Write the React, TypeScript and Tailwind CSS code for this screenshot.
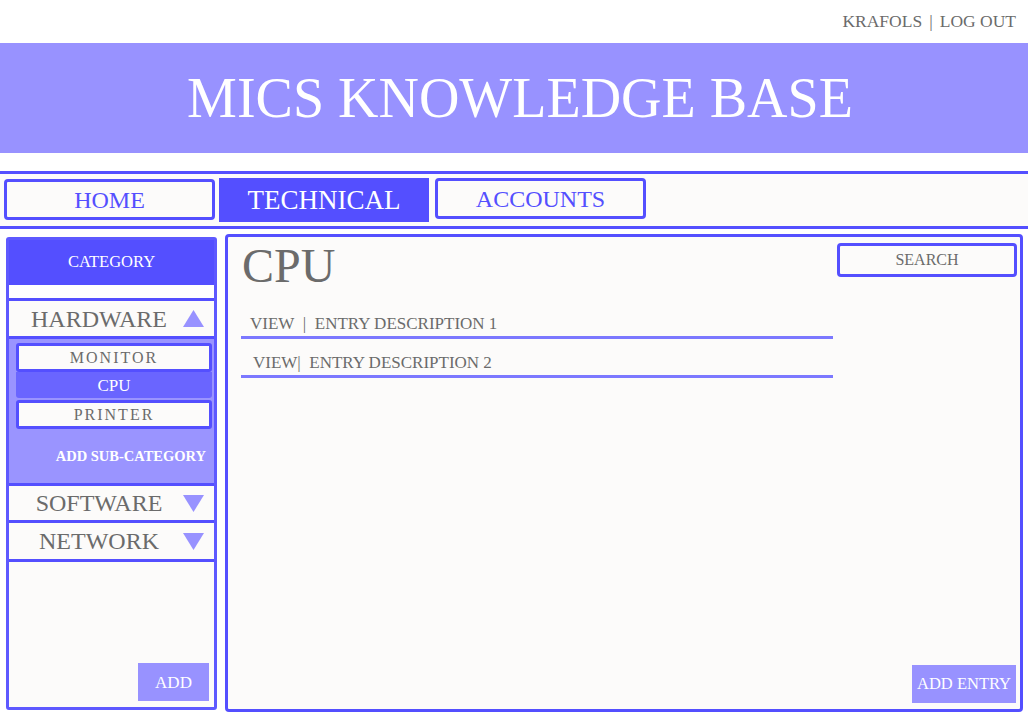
const serif = { fontFamily: '"Liberation Serif", "Times New Roman", serif' };

function Triangle({ up }: { up: boolean }) {
  return (
    <svg width="21" height="17" viewBox="0 0 21 17" className="shrink-0">
      <polygon points={up ? "10.5,0 21,17 0,17" : "0,0 21,0 10.5,17"} fill="#9892ff" />
    </svg>
  );
}

function CategoryRow({ label, up, className }: { label: string; up: boolean; className: string }) {
  return (
    <div className={`flex items-center bg-[#fcfbfa] border-[#544fff] ${className}`}>
      <div className="flex-1 pl-[6px] text-center text-[24px] leading-none text-[#6b6b6b]">{label}</div>
      <div className="mr-[10px]">
        <Triangle up={up} />
      </div>
    </div>
  );
}

const entries = ["VIEW\u00a0\u00a0|\u00a0\u00a0ENTRY DESCRIPTION 1", "VIEW|\u00a0\u00a0ENTRY DESCRIPTION 2"];

export default function App() {
  return (
    <div className="w-[1028px] h-[720px] bg-white overflow-hidden" style={serif}>
      {/* top user bar */}
      <div className="h-[43px] flex items-center justify-end pr-[12px] text-[17.5px] leading-none text-[#6b6b6b]">
        KRAFOLS<span className="mx-[7px]">|</span>LOG OUT
      </div>

      {/* banner */}
      <div className="h-[110px] bg-[#9892ff] flex items-center justify-center pl-[12px]">
        <h1 className="text-[56px] leading-none text-white">MICS KNOWLEDGE BASE</h1>
      </div>

      {/* tabs */}
      <div className="mt-[18px] h-[58px] border-y-[3px] border-[#544fff] bg-[#fcfbfa] flex items-start">
        <div className="ml-[4px] mt-[5px] w-[211px] h-[41px] border-[3px] border-[#544fff] rounded-[4px] flex items-center justify-center text-[24px] leading-none text-[#544fff]">
          HOME
        </div>
        <div className="ml-[4px] mt-[4px] w-[210px] h-[44px] bg-[#544fff] flex items-center justify-center text-[27px] leading-none text-white">
          TECHNICAL
        </div>
        <div className="ml-[6px] mt-[4px] w-[211px] h-[41px] border-[3px] border-[#544fff] rounded-[4px] flex items-center justify-center text-[24px] leading-none text-[#544fff]">
          ACCOUNTS
        </div>
      </div>

      <div className="flex items-start pl-[6px]">
        {/* sidebar */}
        <aside className="mt-[8px] w-[211px] h-[473px] border-[3px] border-[#5e59ff] rounded-[3px] bg-[#fcfbfa] flex flex-col">
          <div className="h-[45px] bg-[#544fff] flex items-center justify-center text-[16.5px] leading-none text-white">
            CATEGORY
          </div>
          <div className="h-[13px] bg-white" />
          <CategoryRow label="HARDWARE" up className="h-[41px] border-y-[3px]" />
          <div className="h-[144px] bg-[#9a94ff] flex flex-col pl-[7px] pr-[2px] pt-[4px]">
            <div className="h-[29px] border-[3px] border-[#544fff] rounded-[3px] bg-[#fcfbfa] flex items-center justify-center text-[16px] tracking-[2px] leading-none text-[#6b6b6b]">
              MONITOR
            </div>
            <div className="h-[26px] bg-[#6a65ff] rounded-b-[3px] flex items-center justify-center text-[17px] leading-none text-white">
              CPU
            </div>
            <div className="mt-[2px] h-[29px] border-[3px] border-[#544fff] rounded-[3px] bg-[#fcfbfa] flex items-center justify-center text-[16px] tracking-[2px] leading-none text-[#6b6b6b]">
              PRINTER
            </div>
            <div className="flex-1 flex items-center justify-end pr-[6px] text-[14.5px] font-bold leading-none text-white">
              ADD SUB-CATEGORY
            </div>
          </div>
          <CategoryRow label="SOFTWARE" up={false} className="h-[40px] border-y-[3px]" />
          <CategoryRow label="NETWORK" up={false} className="h-[39px] border-b-[3px]" />
          <div className="flex-1" />
          <button className="self-end mr-[5px] mb-[6px] w-[71px] h-[38px] bg-[#9892ff] text-[17px] leading-none text-white">
            ADD
          </button>
        </aside>

        {/* main panel */}
        <main className="ml-[8px] mt-[5px] w-[798px] h-[478px] border-[3px] border-[#544fff] rounded-[4px] bg-[#fcfbfa] flex flex-col">
          <div className="flex items-start justify-between">
            <h2 className="pl-[14px] pt-[5px] text-[48px] leading-none text-[#6b6b6b]">CPU</h2>
            <div className="mt-[6px] mr-[3px] w-[180px] h-[34px] border-[3px] border-[#544fff] rounded-[4px] flex items-center justify-center text-[16px] leading-none text-[#6b6b6b]">
              SEARCH
            </div>
          </div>
          <div className="mt-[10px] ml-[13px] w-[592px] flex flex-col">
            {entries.map((e, i) => (
              <div
                key={e}
                className={`pt-[15px] pb-[4px] ${i === 0 ? "pl-[9px]" : "pl-[12px]"} border-b-[3px] border-[#7c78ff] text-[17px] leading-none text-[#6b6b6b]`}
              >
                {e}
              </div>
            ))}
          </div>
          <div className="flex-1" />
          <button className="self-end mr-[4px] mb-[6px] w-[104px] h-[38px] bg-[#9892ff] text-[16.5px] leading-none text-white">
            ADD ENTRY
          </button>
        </main>
      </div>
    </div>
  );
}
